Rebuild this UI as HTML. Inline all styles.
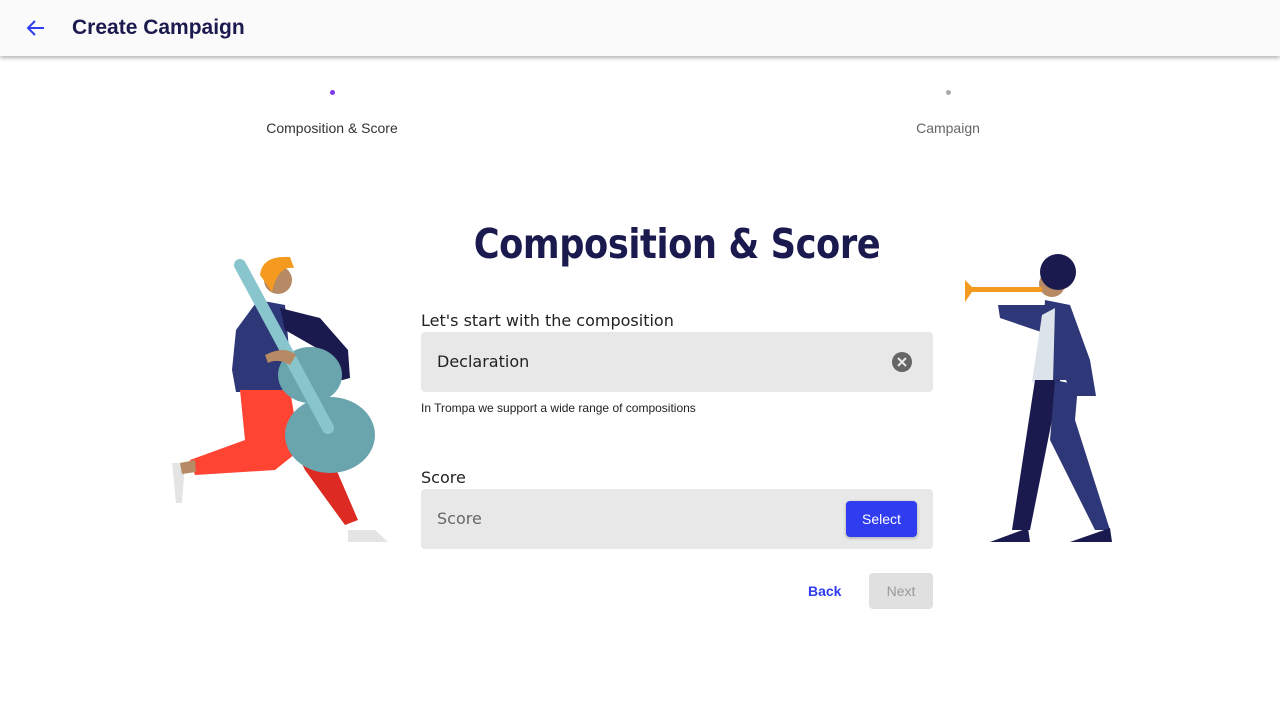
<!DOCTYPE html>
<html><head><meta charset="utf-8"><style>
body{margin:0;width:1280px;height:720px;background:#fff;font-family:"Liberation Sans",sans-serif;position:relative;overflow:hidden}
.top{position:absolute;left:0;top:0;width:1280px;height:56px;background:#fafafa;box-shadow:0 2px 4px rgba(0,0,0,.3)}
.top h1{position:absolute;left:72px;top:16px;margin:0;font-size:21px;font-weight:bold;color:#1b1a4e}
.dot{position:absolute;width:5px;height:5px;border-radius:50%}
.step{position:absolute;font-size:14px;transform:translateX(-50%);top:120px}
h2{position:absolute;left:0;width:1354px;text-align:center;top:220px;margin:0;font-size:41px;font-weight:bold;color:#1b1a4e;font-family:"DejaVu Sans","Liberation Sans",sans-serif;letter-spacing:-0.5px;transform:scaleX(0.86);transform-origin:677px 0}
.lbl{position:absolute;left:421px;font-size:16px;color:#222;font-family:"DejaVu Sans",sans-serif}
.field{position:absolute;left:421px;width:512px;height:60px;background:#e8e8e8;border-radius:4px}
.field span{position:absolute;left:16px;top:20px;font-size:16px;font-family:"DejaVu Sans",sans-serif}
</style></head><body>
<div class="top">
<svg style="position:absolute;left:24px;top:16px" width="24" height="24" viewBox="0 0 24 24"><path d="M20 12H5M11 5l-7 7 7 7" fill="none" stroke="#2f3cf0" stroke-width="2"/></svg>
<h1>Create Campaign</h1></div>
<div class="dot" style="left:330px;top:90px;background:#7c3aed"></div>
<div class="dot" style="left:946px;top:90px;background:#aaa"></div>
<div class="step" style="left:332px;color:#333">Composition &amp; Score</div>
<div class="step" style="left:948px;color:#666">Campaign</div>
<h2>Composition &amp; Score</h2>
<div class="lbl" style="top:311px">Let's start with the composition</div>
<div class="field" style="top:332px"><span style="color:#222">Declaration</span>
<svg style="position:absolute;left:470px;top:19px" width="22" height="22" viewBox="0 0 22 22"><circle cx="11" cy="11" r="10" fill="#666"/><path d="M7 7l8 8M15 7l-8 8" stroke="#e8e8e8" stroke-width="2"/></svg></div>
<div style="position:absolute;left:421px;top:401px;font-size:12px;color:#222">In Trompa we support a wide range of compositions</div>
<div class="lbl" style="top:468px">Score</div>
<div class="field" style="top:489px"><span style="color:#666">Score</span>
<div style="position:absolute;left:425px;top:12px;width:71px;height:36px;background:#2f3cf0;border-radius:4px;color:#fff;font-size:14px;text-align:center;line-height:36px;box-shadow:0 1px 3px rgba(0,0,0,.3)">Select</div></div>
<div style="position:absolute;left:808px;top:583px;font-size:14px;font-weight:bold;color:#2f3cf0">Back</div>
<div style="position:absolute;left:869px;top:573px;width:64px;height:36px;background:#e0e0e0;border-radius:4px;color:#999;font-size:14px;text-align:center;line-height:36px">Next</div>
<svg style="position:absolute;left:0;top:0" width="1280" height="720">
<polygon points="236,330 258,300 285,305 290,360 282,392 236,392 232,370" fill="#2e3777"/>
<polygon points="280,308 320,318 348,350 350,378 335,382 320,350 285,330" fill="#1b1a4e"/>
<polygon points="240,390 290,390 300,450 275,470 195,475 190,460 245,440" fill="#ff4433"/>
<polygon points="290,440 330,455 358,520 345,525 305,470" fill="#dd2a22"/>
<polygon points="172,463 185,463 182,503 176,503" fill="#e4e4e4"/>
<polygon points="348,530 375,530 388,542 348,542" fill="#e4e4e4"/>
<polygon points="180,463 195,460 196,472 182,474" fill="#b58a64"/>
<circle cx="278" cy="280" r="14" fill="#b58a64"/>
<path d="M260,275 Q262,255 290,257 L294,268 Q278,265 272,292 Z" fill="#f39a1f"/>
<ellipse cx="310" cy="375" rx="32" ry="28" fill="#6aa5ae"/>
<ellipse cx="330" cy="435" rx="45" ry="38" fill="#6aa5ae"/>
<line x1="240" y1="265" x2="328" y2="428" stroke="#88c5cc" stroke-width="12" stroke-linecap="round"/>
<path d="M265,355 Q285,345 296,355 L290,365 Q278,358 268,363Z" fill="#b58a64"/>
<polygon points="1045,300 1070,305 1090,360 1096,396 1072,396 1066,380 1040,380" fill="#2e3777"/>
<polygon points="1045,305 1058,315 1050,335 1000,318 998,305" fill="#2e3777"/>
<polygon points="1042,315 1055,308 1053,382 1032,382" fill="#dde3ea"/>
<polygon points="1035,380 1060,380 1030,530 1012,530" fill="#1b1a4e"/>
<polygon points="1055,380 1078,385 1075,420 1110,530 1095,530 1050,440" fill="#2e3777"/>
<polygon points="990,542 1028,528 1030,542" fill="#1b1a4e"/>
<polygon points="1070,542 1110,528 1112,542" fill="#1b1a4e"/>
<circle cx="1052" cy="284" r="13" fill="#b58a64"/>
<circle cx="1058" cy="272" r="18" fill="#1b1a4e"/>
<rect x="972" y="287" width="70" height="5" fill="#f39a1f"/>
<polygon points="965,280 972,287 972,292 965,302" fill="#f39a1f"/>
</svg>
</body></html>
